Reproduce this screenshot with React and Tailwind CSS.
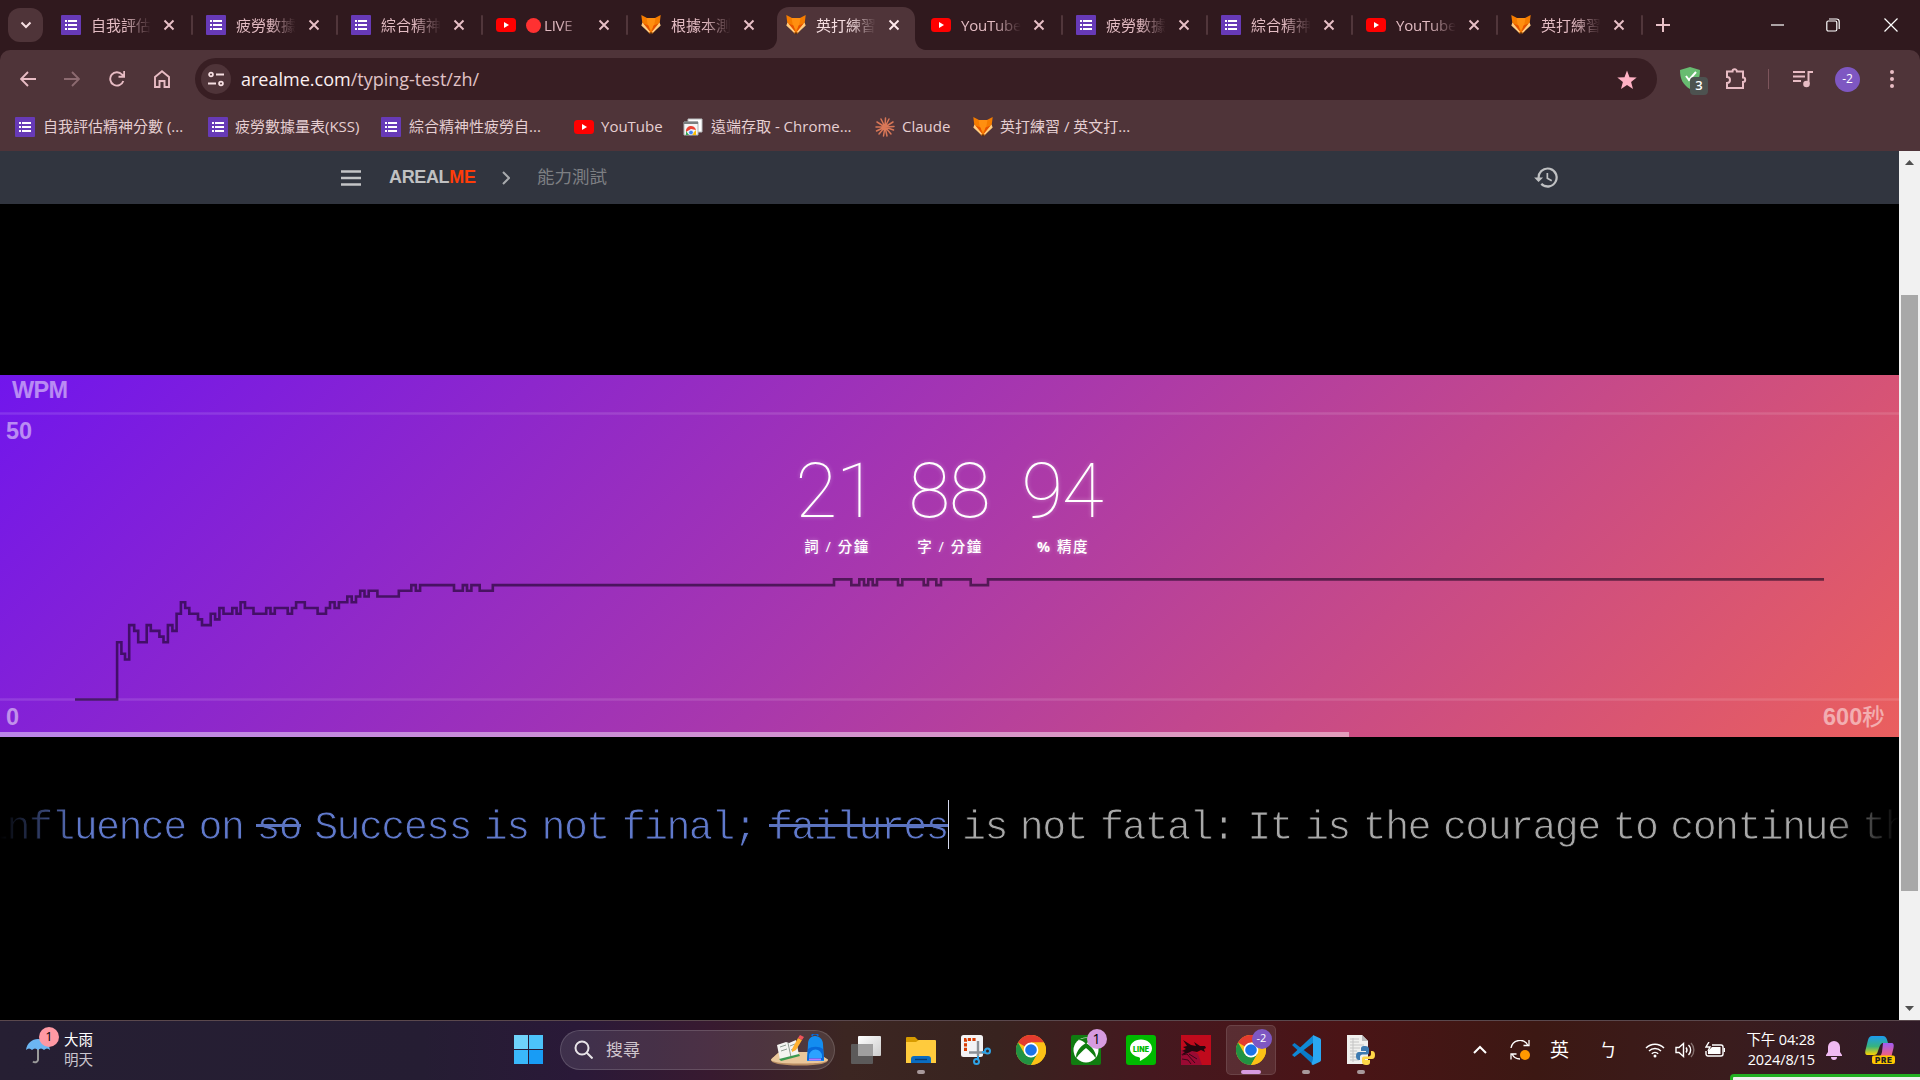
import React from "react";

const STEPS = [
  [75, 0], [117.1, 10], [121.4, 8], [125, 7], [129.2, 13], [134.2, 12], [138.2, 10], [146.7, 13], [150.8, 12],
  [159.4, 11], [163.5, 10], [167.9, 13], [172.4, 12], [176.6, 15], [180.9, 17], [185.2, 16], [189.3, 15],
  [198, 14], [202, 13], [210.7, 15], [215.1, 14], [219.4, 16], [223.5, 15], [232.3, 16], [236.6, 15],
  [240.6, 17], [245, 16], [253.5, 15], [266.2, 16], [270.5, 15], [274.8, 16], [287.7, 15], [292, 16],
  [296.1, 17], [304.8, 16], [317.6, 15], [326, 16], [330, 17], [334.6, 16], [338.9, 17], [347.3, 18],
  [351.7, 17], [356, 18], [360.2, 19], [364.5, 18], [368.7, 19], [377.4, 18], [398.8, 19], [411.3, 20],
  [415.8, 19], [420.1, 20], [454, 19], [462.8, 20], [467, 19], [471.4, 20], [479.7, 19], [492.8, 20],
  [834, 21], [851.3, 20], [859.3, 21], [864, 20], [868.3, 21], [872.7, 20], [877, 21], [898, 20], [902.3, 21],
  [923.7, 20], [928, 21], [936.3, 20], [941, 21], [970.7, 20], [988, 21],
];
const levelY = (k) => (324.5 - 5.72 * k).toFixed(1);
const CHART_PATH =
  STEPS.map(([x, k], i) => (i === 0 ? `M${x} ${levelY(k)}` : `H${x}V${levelY(k)}`)).join("") + "H1824";

const FormsIcon = () => (
  <svg className="block h-5 w-5 shrink-0" viewBox="0 0 20 20">
    <rect width="20" height="20" rx="1" fill="#673ab7" />
    <g fill="#fff">
      <rect x="4" y="5" width="2" height="2" /><rect x="7" y="5" width="9" height="2" />
      <rect x="4" y="9" width="2" height="2" /><rect x="7" y="9" width="9" height="2" />
      <rect x="4" y="13" width="2" height="2" /><rect x="7" y="13" width="9" height="2" />
    </g>
  </svg>
);
const YtIcon = () => (
  <svg className="block h-5 w-5 shrink-0" viewBox="0 0 20 20">
    <rect y="3" width="20" height="14" rx="3.5" fill="#f00" />
    <path d="M8 7v6l5-3z" fill="#fff" />
  </svg>
);
const FoxIcon = () => (
  <svg className="block h-5 w-5 shrink-0" viewBox="0 0 20 20">
    <path d="M.3 0L6 3h8l5.700-3-1 8L16 13l-5 6H9l-5-6L1.300 8z" fill="#f57c00" />
    <path d="M5.500 3h9L13 11l-3 4-3-4z" fill="#ff8f10" />
    <path d="M1.500 7.500L.3 10.500l8 7.500.7-1.500zM18.500 7.500l1.200 3-8 7.500-.7-1.500z" fill="#ffcc80" />
    <path d="M2.500 8.500l5 2L9.500 17zM17.500 8.500l-5 2-2 6.500z" fill="#e65100" />
    <path d="M8.500 17.500h3L10 20z" fill="#4e2a14" />
  </svg>
);
const RemoteIcon = () => (
  <svg className="block h-5 w-5 shrink-0" viewBox="0 0 20 20">
    <path d="M5 2h14v13H5z" fill="#fff" stroke="#b9bcbe" />
    <path d="M1 5h14v13H1z" fill="#f5f5f5" stroke="#b0b4b6" />
    <path d="M1 4.500h14V7H1z" fill="#7b7f80" />
    <path d="M3 15a5 5 0 0 1 10-2L8 12z" fill="#ea4335" />
    <path d="M3 14l3 4H3z" fill="#34a853" /><path d="M13 13v5H8z" fill="#fbbc05" />
    <circle cx="8" cy="15.500" r="2.300" fill="#4285f4" stroke="#fff" strokeWidth=".6" />
  </svg>
);
const ClaudeIcon = () => (
  <svg className="block h-5 w-5 shrink-0" viewBox="0 0 20 20" stroke="#d97757" strokeWidth="1.500" strokeLinecap="round">
    <path d="M10 10L10.500 1M10 10L14 2M10 10L18 5M10 10L19 9.500M10 10L18.500 13M10 10L16 17M10 10L12 19M10 10L8.500 19M10 10L4 17M10 10L1.500 14M10 10L1 10M10 10L2 5M10 10L6 2" />
  </svg>
);
const ICONS = { forms: FormsIcon, yt: YtIcon, fox: FoxIcon, remote: RemoteIcon, claude: ClaudeIcon };

const Close = () => (
  <svg className="block h-3 w-3 shrink-0" viewBox="0 0 12 12" fill="none" stroke="currentColor" strokeWidth="1.900">
    <path d="M1.500 1.500l9 9M10.500 1.500l-9 9" />
  </svg>
);

const TABS = [
  ["forms", "自我評估"], ["forms", "疲勞數據"], ["forms", "綜合精神"], ["live", "LIVE"], ["fox", "根據本測"],
  ["fox", "英打練習"], ["yt", "YouTube"], ["forms", "疲勞數據"], ["forms", "綜合精神"], ["yt", "YouTube"], ["fox", "英打練習"],
];

function Tab({ kind, title, active, sep }) {
  const Icon = ICONS[kind === "live" ? "yt" : kind];
  return (
    <div className="relative flex h-[43px] w-[145px] shrink-0">
      {active && (
        <svg className="absolute -left-2 top-0 h-[43px] w-[161px]" viewBox="0 0 161 43">
          <path d="M0 43c7 0 12-5 12-12V12C12 5 17 0 24 0h114c7 0 12 5 12 12v19c0 7 5 12 11 12z" fill="#4f3439" />
        </svg>
      )}
      <div className="relative flex h-9 w-full items-center pl-[13px]">
        <Icon />
        <div className={"ml-[10px] flex h-6 w-[60px] items-center whitespace-nowrap text-[15px] [mask-image:linear-gradient(90deg,#000_55%,transparent)] " + (active ? "text-[#f6dfe2]" : "text-[#e3bcc3]")}>
          {kind === "live" && <span className="mr-[3px] h-[15px] w-[15px] shrink-0 rounded-full bg-[#ff3131]" />}
          <span className={/[A-Z]/.test(title) ? "tracking-[-0.2px]" : ""}>{title}</span>
        </div>
        <div className={"ml-[12px] " + (active ? "text-[#ffe9ec]" : "text-[#e8c0c7]")}><Close /></div>
      </div>
      {sep && <div className="mt-2 h-5 w-[2px] shrink-0 rounded bg-[#51363b]" />}
    </div>
  );
}

const BOOKMARKS = [
  ["forms", "自我評估精神分數 (...", "w-[193px]", "ml-[8px]"],
  ["forms", "疲勞數據量表(KSS)", "w-[173px]", "ml-[7px]"],
  ["forms", "綜合精神性疲勞自...", "w-[193px]", "ml-[8px]"],
  ["yt", "YouTube", "w-[109px]", "ml-[7px]"],
  ["remote", "遠端存取 - Chrome...", "w-[192px]", "ml-[8px]"],
  ["claude", "Claude", "w-[98px]", "ml-[7px]"],
  ["fox", "英打練習 / 英文打...", "w-[170px]", "ml-[7px]"],
];

const Chrome = ({ className }) => (
  <svg className={className} viewBox="0 0 30 30">
    <circle cx="15" cy="15" r="15" fill="#fbc116" />
    <path d="M15 15L2 7.500A15 15 0 0 1 28 7.500H15z" fill="#e33b2e" />
    <path d="M2 7.500A15 15 0 0 0 15 30l6.500-11.200L15 15 8.500 18.800z" fill="#229342" />
    <path d="M28 7.500H15v7.500l6.500 3.800L15 30A15 15 0 0 0 28 7.500z" fill="#fbc116" />
    <circle cx="15" cy="15" r="7.400" fill="#fff" /><circle cx="15" cy="15" r="5.800" fill="#1a73e8" />
  </svg>
);

const APP_ICONS = [
  <svg key="tv" className="h-[30px] w-[30px]" viewBox="0 0 30 30">
    <defs><linearGradient id="tvw" x2="1" y2="1"><stop stopColor="#fff" /><stop offset="1" stopColor="#ccc" /></linearGradient></defs>
    <rect x="7" y="1" width="23" height="20" rx="1" fill="url(#tvw)" />
    <rect x="0" y="9" width="22" height="20" rx="1" fill="#5c5a5a" /><rect x="7" y="9" width="15" height="12" fill="#a09f9f" />
  </svg>,
  <svg key="ex" className="h-[30px] w-[30px]" viewBox="0 0 30 30">
    <path d="M0 3a1 1 0 0 1 1-1h8l3 3h6v6H0z" fill="#d79b00" />
    <path d="M0 7h10l3-2h16a1 1 0 0 1 1 1v22H0z" fill="#ffcb3d" />
    <path d="M5 28v-4a3 3 0 0 1 3-3h14a3 3 0 0 1 3 3v4z" fill="#0a6cc0" />
    <path d="M9 24.500h12" stroke="#063b70" strokeWidth="1.300" />
  </svg>,
  <svg key="sn" className="h-[30px] w-[30px]" viewBox="0 0 30 30">
    <rect width="22" height="22" rx="2.500" fill="#f3f3f5" />
    <path d="M4.500 16V4.500H16" fill="none" stroke="#d83b01" strokeWidth="3" strokeDasharray="3.200 1.400" />
    <path d="M17 6v15M8 17.500h16" stroke="#8b9096" strokeWidth="2.400" />
    <g fill="none" stroke="#2ea3e6" strokeWidth="2"><circle cx="26.500" cy="16" r="2.500" /><circle cx="15.500" cy="26.500" r="2.500" /><path d="M17 21v4M21 17.500l4-1" /></g>
  </svg>,
  <Chrome key="c1" className="h-[30px] w-[30px]" />,
  <svg key="xb" className="h-[30px] w-[30px]" viewBox="0 0 30 30">
    <rect width="30" height="30" rx="2" fill="#107c10" /><circle cx="15" cy="15" r="12.500" fill="#fff" />
    <path d="M7 5c4 0 6 2 8 4 2-2 4-4 8-4-2-1-5-2-8-2s-6 1-8 2zM12 10C7 14 4 20 5.500 23 8 19 12 15.500 15 13c3 2.500 7 6 9.500 10 1.500-3-1.500-9-6.500-13l-3-2z" fill="#107c10" />
  </svg>,
  <svg key="ln" className="h-[30px] w-[30px]" viewBox="0 0 30 30">
    <rect width="30" height="30" rx="3" fill="#00b900" />
    <path d="M15 4.500c-6.500 0-11 4-11 9 0 4.500 4 8 9 8.800 1.500.3 1 1.500.8 3.700 4-2 12.200-6.500 12.200-12.500 0-5-4.500-9-11-9z" fill="#fff" />
    <text x="15" y="16.500" textAnchor="middle" fontSize="7" fontWeight="900" fill="#00b900" fontFamily="Inter, sans-serif" textLength="16">LINE</text>
  </svg>,
  <svg key="dr" className="h-[30px] w-[30px]" viewBox="0 0 30 30">
    <rect width="30" height="30" fill="#c00a1c" /><path d="M0 15l9-1 8 5 4 11H0z" fill="#9a0a33" />
    <path d="M2 5l8 5 5 1-2-4 6 4 5 0 1 2-2 1 1 3-4-2-4 2-5-1-4 2-7 2 4-3-3-1 4-2-3-2 4-1z" fill="#24060d" />
    <path d="M1 20l5-1 8 9M1 24l6 1 3 4M8 19l8 5" stroke="#3a0616" strokeWidth="1" fill="none" />
  </svg>,
  <Chrome key="c2" className="h-[30px] w-[30px]" />,
  <svg key="vs" className="h-[30px] w-[30px]" viewBox="0 0 30 30">
    <path d="M1 10l2.500-2L22 22v7.500z" fill="#0a7bc8" /><path d="M1 20l2.500 2L22 8V.5z" fill="#0f89d6" />
    <path d="M22 0l7 3.300a2 2 0 0 1 1 1.700v20a2 2 0 0 1-1 1.700L22 30l-1.500-.7L22 24V6z" fill="#2aa7f2" />
  </svg>,
  <svg key="py" className="h-[30px] w-[30px]" viewBox="0 0 30 30">
    <path d="M1 0h15l6 6v23H1z" fill="#f0f0ee" /><path d="M16 0v6h6z" fill="#bbb" />
    <path d="M4 4h9M4 7h9M4 10h14M4 13h10M4 16h7M4 19h7M4 22h7M4 25h9M7 3v24" stroke="#c4c4c4" strokeWidth="1" />
    <path d="M19 11c-4 0-4 1.500-4 3v2h5v1h-7c-2 0-3 1.500-3 4s1 4 3 4h1v-3c0-1.500 1-2.500 2.500-2.500H21c1.300 0 2-1 2-2V14c0-2-1.500-3-4-3z" fill="#3d7ab0" />
    <path d="M20 30c4 0 4-1.500 4-3v-2h-5v-1h7c2 0 3-1.500 3-4s-1-4-3-4h-1v3c0 1.500-1 2.500-2.500 2.500H18c-1.300 0-2 1-2 2V27c0 2 1.500 3 4 3z" fill="#ffd747" />
  </svg>,
];

function Browser() {
  return (
    <header className="h-[151px] bg-[#4f3439]">
      <div className="flex h-[50px] bg-[#30191e] pt-[7px]">
        <div className="ml-2 mr-[5px] mt-px flex h-[34px] w-[35px] shrink-0 items-center justify-center rounded-xl bg-[#4f3439]">
          <svg className="h-3 w-3" viewBox="0 0 12 12" fill="none" stroke="#f6dfe2" strokeWidth="2"><path d="M1.500 3.500L6 8l4.500-4.500" /></svg>
        </div>
        {TABS.map(([kind, title], i) => (
          <Tab key={i} kind={kind} title={title} active={i === 5} sep={i !== 4 && i !== 5} />
        ))}
        <svg className="ml-[13px] mt-[11px] h-[14px] w-[14px] shrink-0" viewBox="0 0 14 14" stroke="#e8c0c7" strokeWidth="2"><path d="M7 0v14M0 7h14" /></svg>
        <div className="ml-auto mr-[22px] flex h-9 items-center text-white">
          <svg className="h-[14px] w-[14px]" viewBox="0 0 14 14" stroke="currentColor" strokeWidth="1.200"><path d="M0 7h13" /></svg>
          <svg className="ml-[41px] h-[14px] w-[14px]" viewBox="0 0 14 14" fill="none" stroke="currentColor" strokeWidth="1.200"><rect x=".8" y="3" width="10" height="10" rx="1.500" /><path d="M3 1h7.500A2.700 2.700 0 0 1 13.200 3.700V11" /></svg>
          <svg className="ml-[44px] h-[14px] w-[14px]" viewBox="0 0 14 14" stroke="currentColor" strokeWidth="1.200"><path d="M.5.5l13 13M13.500.5l-13 13" /></svg>
        </div>
      </div>
      <div className="flex h-[50px] items-end bg-[#30191e]">
        <div className="flex h-[50px] w-full items-end rounded-t-[10px] bg-[#4f3439]">
          <div className="mb-[12px] flex w-[195px] shrink-0 items-center pl-5 text-[#e8bcc4]">
            <svg className="h-4 w-4" viewBox="0 0 16 16" fill="none" stroke="currentColor" strokeWidth="1.900"><path d="M16 8H1.500M8 1L1 8l7 7" /></svg>
            <svg className="ml-7 h-4 w-4 text-[#8c6a70]" viewBox="0 0 16 16" fill="none" stroke="currentColor" strokeWidth="1.900"><path d="M0 8h14.500M8 1l7 7-7 7" /></svg>
            <svg className="ml-[29px] h-4 w-4" viewBox="0 0 16 16" fill="none" stroke="currentColor" strokeWidth="1.900"><path d="M14.300 10A6.700 6.700 0 1 1 13 3.500L15 5.500M15.200 0v5.800H9.500" /></svg>
            <svg className="ml-[29px] h-[18px] w-4" viewBox="0 0 16 18" fill="none" stroke="currentColor" strokeWidth="1.900"><path d="M1 7l7-5.700L15 7v10h-4.500v-6h-5v6H1z" /></svg>
          </div>
          <div className="flex h-[42px] w-[1462px] shrink-0 items-center rounded-full bg-[#381e23] pl-[6px] pr-5">
            <div className="flex h-[30px] w-[30px] items-center justify-center rounded-full bg-[#4f3439]">
              <svg className="h-4 w-4" viewBox="0 0 16 16" fill="none" stroke="#f6dfe2" strokeWidth="1.800"><circle cx="3" cy="3.500" r="1.900" /><path d="M8 3.500h8M0 12.500h8" /><circle cx="13" cy="12.500" r="1.900" /></svg>
            </div>
            <span className="ml-[10px] text-[18px] text-[#e0c3c7]"><span className="text-[#fbeff0]">arealme.com</span>/typing-test/zh/</span>
            <svg className="ml-auto mt-[2px] h-5 w-5" viewBox="0 0 20 20" fill="#ffb1c4"><path d="M10 .5l2.500 6.700 7.200.3-5.600 4.500 1.900 7L10 15l-6 4 1.900-7L.3 7.500l7.200-.3z" /></svg>
          </div>
          <div className="mb-2 ml-[23px] flex h-[26px] grow items-center text-[#e8bcc4]">
            <div className="relative h-6 w-6">
              <svg className="h-[22px] w-5" viewBox="0 0 20 22"><path d="M0 3l10-3 10 3c0 9-3 15-10 19C3 18 0 12 0 3z" fill="#68bc71" /><path d="M6 9l3 4 7-8" fill="none" stroke="#fff" strokeWidth="2" /></svg>
              <span className="absolute left-2.5 top-2.5 flex h-[18px] w-[18px] items-center justify-center rounded bg-[#4d5250] text-[13px] font-semibold text-white">3</span>
            </div>
            <svg className="ml-[21px] h-[22px] w-[22px]" viewBox="0 0 22 22" fill="none" stroke="currentColor" strokeWidth="2"><path d="M2 3.500h5.500a2 2 0 0 1 4.400 0H18v6a2 2 0 0 1 0 4.400V20H2v-5a3 3 0 0 0 0-6z" /></svg>
            <div className="ml-[21px] h-5 w-px bg-[#7d555c]" />
            <svg className="ml-[24px] h-[18px] w-5" viewBox="0 0 20 18" fill="none" stroke="currentColor" strokeWidth="2"><path d="M0 2h12M0 6.500h12M0 11h8M15.500 14V2H20" /><circle cx="13.500" cy="14" r="2.300" fill="currentColor" /></svg>
            <div className="ml-[22px] flex h-[25px] w-[25px] items-center justify-center rounded-full bg-[#7e57c2] text-[12px] text-white">-2</div>
            <svg className="ml-[30px] h-[18px] w-1" viewBox="0 0 4 18" fill="currentColor"><circle cx="2" cy="2" r="2" /><circle cx="2" cy="9" r="2" /><circle cx="2" cy="16" r="2" /></svg>
          </div>
        </div>
      </div>
      <div className="flex h-[51px] items-center pl-[15px] pt-[2px] text-[15px] text-[#e6cfd2]">
        {BOOKMARKS.map(([kind, title, w, ml], i) => {
          const Icon = ICONS[kind];
          return (
            <div key={i} className={"flex shrink-0 items-center whitespace-nowrap " + w}>
              <Icon /><span className={ml}>{title}</span>
            </div>
          );
        })}
      </div>
    </header>
  );
}

const Stat = ({ value, label }) => (
  <div className="flex w-[113px] flex-col items-center text-white">
    <span className="-ml-px font-['Roboto'] text-[76px] font-thin leading-[76px] tracking-[-1px] [text-shadow:0_0_4px_rgba(255,255,255,0.35)]">{value}</span>
    <span className="mt-[8px] pl-px font-['Open_Sans','Noto_Sans_CJK_TC',sans-serif] text-[14.500px] font-medium leading-5 tracking-[1.5px] [text-shadow:0_0_4px_rgba(255,255,255,0.4)]">
      {label.startsWith("%") ? <><b>%</b>{label.slice(1)}</> : label}
    </span>
  </div>
);

/* A mistyped word, crossed out above its glyphs. */
const Wrong = ({ children }) => (
  <span className="relative after:absolute after:inset-x-0 after:top-[18px] after:h-[3px] after:bg-[#5b73bf] after:content-['']">{children}</span>
);

function Page() {
  return (
    <main className="flex h-[869px]">
      <div className="w-[1899px] overflow-hidden bg-black">
        <nav className="flex h-[53px] items-center bg-[#31353f] pl-[341px]">
          <svg className="h-4 w-5" viewBox="0 0 20 16" stroke="#c3c4c6" strokeWidth="2.400"><path d="M0 1.500h20M0 8h20M0 14.500h20" /></svg>
          <span className="ml-7 w-[88px] font-['Liberation_Sans'] text-[18px] font-bold tracking-[-0.350px] text-[#c0c1c2]">AREAL<span className="text-[#ff3c08]">ME</span></span>
          <svg className="ml-[25px] h-[14px] w-2" viewBox="0 0 8 14" fill="none" stroke="#a8aaad" strokeWidth="2"><path d="M1 1l6 6-6 6" /></svg>
          <span className="-mt-[2px] ml-[27px] font-['Noto_Sans_CJK_TC'] text-[17.5px] text-[#7d7f83]">能力測試</span>
          <svg className="ml-auto mr-[339px] h-[27px] w-[27px]" viewBox="0 0 24 24" fill="#bfc0c2"><path d="M13 3a9 9 0 0 0-9 9H1l3.890 3.890.07.14L9 12H6a7 7 0 1 1 2.060 4.940l-1.420 1.420A9 9 0 1 0 13 3zm-1 5v5l4.280 2.540.72-1.210-3.500-2.080V8z" /></svg>
        </nav>
        <section className="relative mt-[171px] flex h-[362px] flex-col bg-[linear-gradient(135deg,#7116ec_0%,#a938ac_48%,#ea5f5e_100%)]">
          <svg className="absolute left-0 top-0 h-[362px] w-[1899px]" viewBox="0 0 1899 362" fill="none">
            <path d="M0 38.500h1899M0 324.500h1899" stroke="#fff" strokeOpacity=".12" strokeWidth="2.500" />
            <path d={CHART_PATH} stroke="#12001c" strokeOpacity=".58" strokeWidth="2.600" />
            <g fill="#fff" fillOpacity=".5" fontFamily="'Liberation Sans','Noto Sans CJK TC',sans-serif" fontWeight="700" fontSize="23.500">
              <text x="12" y="23" textLength="56">WPM</text>
              <text x="6" y="64">50</text>
              <text x="6" y="350">0</text>
              <text x="1823" y="350">600<tspan fontWeight="500" fontSize="22.500">秒</tspan></text>
            </g>
          </svg>
          <div className="relative mt-[78px] flex justify-center">
            <Stat value="21" label="詞 / 分鐘" />
            <Stat value="88" label="字 / 分鐘" />
            <Stat value="94" label="% 精度" />
          </div>
          <div className="mt-auto h-[5px] w-[1349px] bg-white/45" />
        </section>
        <section className="mt-[63px] flex h-[49px] whitespace-pre font-['Liberation_Mono',monospace] text-[40px] leading-[57px] tracking-[-1.630px] [-webkit-text-stroke:0.9px_#000] [mask-image:linear-gradient(90deg,transparent,#000_80px,#000_1830px,transparent)] [word-spacing:-9.350px]">
          <div className="flex w-[948px] shrink-0 justify-end text-[#6079cb]">
            <span>influence on <Wrong>so</Wrong> Success is not final; <Wrong>failures</Wrong></span>
          </div>
          <div className="w-px shrink-0 bg-[#d5d9ee]" />
          <div className="w-[950px] text-[#a8a8a8]"> is not fatal: It is the courage to continue th</div>
        </section>
      </div>
      <aside className="flex w-[21px] flex-col items-center bg-[#f1f1f1]">
        <svg className="mt-[9px] h-[5px] w-[9px]" viewBox="0 0 9 5" fill="#505050"><path d="M0 5l4.500-5L9 5z" /></svg>
        <div className="mt-[130px] h-[596px] w-[17px] bg-[#a8a8a8]" />
        <svg className="mb-[9px] mt-auto h-[5px] w-[9px]" viewBox="0 0 9 5" fill="#505050"><path d="M0 0l4.500 5L9 0z" /></svg>
      </aside>
    </main>
  );
}

function Taskbar() {
  return (
    <footer className="relative flex h-[60px] items-center overflow-hidden border-t border-[#5a484d] bg-[linear-gradient(90deg,#261f33_0%,#251d33_22%,#2a1938_30%,#381a30_37%,#3c2622_44%,#38231f_52%,#45181f_60%,#4a1416_70%,#3c1813_80%,#3a1c1d_90%,#301b27_100%)] pb-[2px] text-white">
      <div className="flex w-[514px] items-center pl-[26px]">
        <div className="relative h-7 w-6">
          <svg className="h-7 w-6" viewBox="0 0 24 28"><path d="M12 12v12a3 3 0 0 1-5 1.500" fill="none" stroke="#9a9a9a" strokeWidth="2" /><path d="M0 14C1 7 6 3 12 3s11 4 12 11c-2-2-4-2-6 0-2-2-4-2-6 0-2-2-4-2-6 0-2-2-4-2-6 0z" fill="#6cb6f2" /></svg>
          <span className="absolute -top-[9px] left-[13px] flex h-5 w-5 items-center justify-center rounded-full bg-[#ff99a4] text-[13px] text-black">1</span>
        </div>
        <div className="ml-[14px] text-[14.500px] leading-5"><div>大雨</div><div className="text-[#c9c4cd]">明天</div></div>
      </div>
      <div className="grid h-[29px] w-[29px] grid-cols-2 gap-px">
        <div className="bg-[#6fd3fb]" /><div className="bg-[#4cc3fa]" /><div className="bg-[#3ab8fa]" /><div className="bg-[#189cf5]" />
      </div>
      <div className="ml-[17px] flex h-10 w-[275px] items-center rounded-full border border-white/15 bg-white/10 pl-[13px] pr-[6px]">
        <svg className="h-[19px] w-[19px]" viewBox="0 0 19 19" fill="none" stroke="#e8e4e8" strokeWidth="2"><circle cx="8" cy="8" r="6.500" /><path d="M12.500 12.500l6 6" /></svg>
        <span className="ml-[13px] text-[17px] text-[#cfc5cd]">搜尋</span>
        <svg className="ml-auto h-8 w-[57px]" viewBox="0 0 57 32">
          <path d="M0 26c0-1 7-7 9-8h36l12 8c0 3-8 5.500-28 5.500S0 29 0 26z" fill="#b98d62" /><path d="M0 25.500c2-2 7-7 9-7.500h36l12 7.500c0 2.500-8 4-28 4S0 28 0 25.500z" fill="#e9c79b" />
          <path d="M6 11l9-3 3 1 7-3 3 15-9 3-10 2z" fill="#f4f4f0" /><path d="M17 9l3 14M9 13l6-2M10 17l6-2M19 12l5-2M20 16l5-2" stroke="#8d9a90" strokeWidth="1" /><path d="M8 25l20-5 1 2-19 5z" fill="#3c9a50" />
          <path d="M21 15l6-11 4 2-6 10-4 2z" fill="#ffb02e" /><path d="M27 4l2-3 4 2-2 3z" fill="#f0535a" />
          <path d="M37 10c0-5 3-8 7-8s8 3 8 8l1 17H36z" fill="#138df0" /><path d="M37 15c4-3 11-3 15 0l1 11H36z" fill="#0869d9" /><path d="M38 22a6 6 0 0 1 13 0v2H38z" fill="#2ba3ff" /><path d="M41 2c0-3 6-3 6 0" fill="none" stroke="#0869d9" strokeWidth="1.500" /><path d="M38 25.500h12" stroke="#b47aff" strokeWidth="2" />
        </svg>
      </div>
      <div className="ml-[3px] flex">
        {APP_ICONS.map((icon, i) => (
          <div key={i} className="relative flex h-[50px] w-[55px] items-center justify-center">
            {i === 7 && <div className="absolute inset-y-0 left-[3px] w-[50px] rounded-[5px] border border-white/10 bg-white/10" />}
            <div className="relative">{icon}
              {i === 4 && <span className="absolute -top-[6px] left-4 flex h-5 w-5 items-center justify-center rounded-full bg-[#d79be0] text-[14px] text-black">1</span>}
              {i === 7 && <span className="absolute -top-[6px] left-4 flex h-5 w-5 items-center justify-center rounded-full bg-[#7e57c2] text-[11px] text-white">-2</span>}
            </div>
            {[1, 8, 9].includes(i) && <span className="absolute bottom-px h-1 w-2 rounded-full bg-[#a8999b]" />}
            {i === 7 && <span className="absolute bottom-px h-1 w-5 rounded-full bg-[#d79be0]" />}
          </div>
        ))}
      </div>
      <div className="ml-[85px] flex grow items-center">
        <svg className="h-[9px] w-[14px]" viewBox="0 0 14 9" fill="none" stroke="#fff" strokeWidth="2"><path d="M1 8l6-6 6 6" /></svg>
        <svg className="ml-[23px] h-5 w-5" viewBox="0 0 20 20" fill="none" stroke="#fff" strokeWidth="1.300"><path d="M1 8a9 9 0 0 1 17-2.500M19 0v5.500h-5.500M10 19A9 9 0 0 1 2 14M1 19.500V14h5.500" /><circle cx="15" cy="15" r="5" fill="#ff9800" stroke="none" /></svg>
        <span className="ml-5 text-[19px] leading-6">英</span>
        <span className="ml-[30px] text-[18px] leading-6">ㄅ</span>
        <svg className="ml-[28px] h-4 w-5" viewBox="0 0 20 16" fill="none" stroke="#fff" strokeWidth="1.500"><path d="M1 6a12.500 12.500 0 0 1 18 0M4 9a8.500 8.500 0 0 1 12 0M6.800 11.800a4.600 4.600 0 0 1 6.400 0" /><circle cx="10" cy="14" r="1.500" fill="#fff" stroke="none" /></svg>
        <svg className="ml-[10px] h-4 w-5" viewBox="0 0 20 16" fill="none" stroke="#fff" strokeWidth="1.400"><path d="M1 5.500h3L8.500 1.500v13L4 10.500H1z" /><path d="M11 5.500a4 4 0 0 1 0 5M13.500 3a7 7 0 0 1 0 10" /><path d="M16 1a10 10 0 0 1 0 14" stroke="#84706e" /></svg>
        <svg className="ml-[10px] h-4 w-5" viewBox="0 0 20 16" fill="none" stroke="#fff" strokeWidth="1.400"><path d="M7 3h9a2 2 0 0 1 2 2v7a2 2 0 0 1-2 2H3a2 2 0 0 1-2-2V9" /><path d="M7 5h8.500v7H3V9z" fill="#fff" stroke="none" /><path d="M19.300 6v4M4 0L1 5h4L3 9" /></svg>
        <div className="ml-[15px] w-[75px] whitespace-nowrap text-right text-[14.500px] leading-5 tracking-[-0.150px]"><div>下午 04:28</div><div>2024/8/15</div></div>
        <svg className="ml-[11px] h-5 w-4" viewBox="0 0 16 20" fill="#f0baf2"><path d="M2 7a6 6 0 0 1 12 0v5l2 3v1H0v-1l2-3zM5 17h6a3 3 0 0 1-6 0z" /></svg>
        <svg className="ml-[23px] h-7 w-[30px]" viewBox="0 0 30 28">
          <defs>
            <linearGradient id="cpa" x2="0" y2="1"><stop stopColor="#1c9bf0" /><stop offset=".55" stopColor="#36b37e" /><stop offset="1" stopColor="#ffd400" /></linearGradient>
            <linearGradient id="cpb" x2="0" y2="1"><stop stopColor="#a05cf5" /><stop offset="1" stopColor="#f4607c" /></linearGradient>
          </defs>
          <path d="M7 0h11c3 0 4 3 5 7h-5c-2 0-3 2-5 8-1 3-2 4-4 4H3c-3 0-3-2-2.500-5L3 4c1-3 2-4 4-4z" fill="url(#cpa)" />
          <path d="M18 7h8c3 0 3 2 2.500 5l-2 8H14c2 0 2-1 3-4z" fill="url(#cpb)" />
          <rect x="7" y="19.500" width="23" height="8.500" rx="2" fill="#ffc800" />
          <text x="18.500" y="26.700" textAnchor="middle" fontSize="8" fontWeight="900" fill="#222" fontFamily="Inter, sans-serif" textLength="17">PRE</text>
        </svg>
      </div>
      <div className="absolute bottom-0 right-0 h-[6px] w-[190px] rounded-tl border-l-[3px] border-t-[3px] border-[#22b022] bg-[#f0f0f0]" />
    </footer>
  );
}

export default function App() {
  return (
    <div className="h-[1080px] w-[1920px] overflow-hidden bg-black font-['Open_Sans','Noto_Sans_CJK_TC',sans-serif]">
      <Browser />
      <Page />
      <Taskbar />
    </div>
  );
}
